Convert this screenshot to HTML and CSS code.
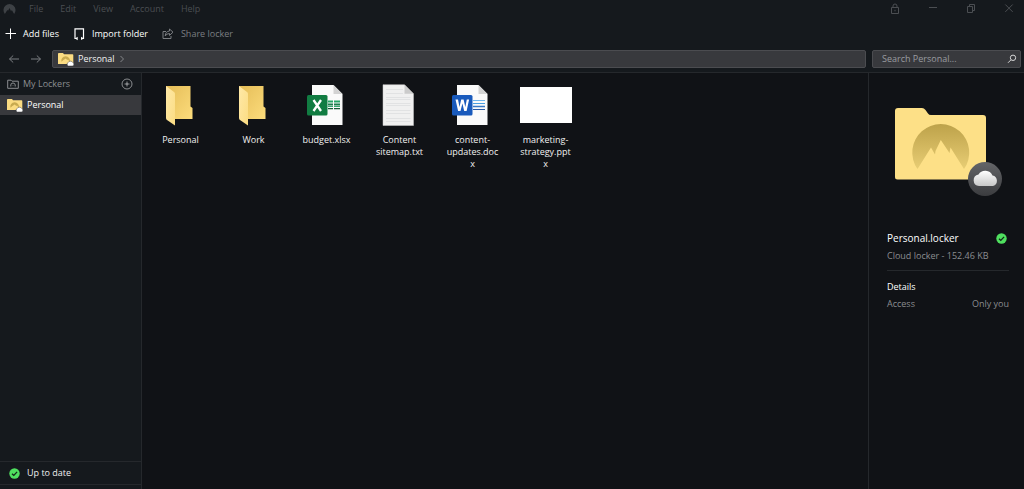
FILE: index.html
```html
<!DOCTYPE html>
<html lang="en">
<head>
<meta charset="utf-8">
<meta name="viewport" content="width=device-width, initial-scale=1">
<title>Personal</title>
<link rel="stylesheet" href="styles.css">
</head>
<body>
<svg class="defs" aria-hidden="true">
  <defs>
    <linearGradient id="flap" x1="0" y1="0" x2="1" y2="1"><stop offset="0" stop-color="#ffe9a8"/><stop offset="1" stop-color="#fbdc82"/></linearGradient>
    <linearGradient id="back" x1="0" y1="0" x2="1" y2="1"><stop offset="0" stop-color="#e5bd58"/><stop offset="1" stop-color="#fcdc7c"/></linearGradient>
    <linearGradient id="disc" x1="0" y1="0" x2="0" y2="1"><stop offset="0" stop-color="#bda24a"/><stop offset="1" stop-color="#e8cd74"/></linearGradient>
    <linearGradient id="badge" x1="0" y1="0" x2="0" y2="1"><stop offset="0" stop-color="#646568"/><stop offset="1" stop-color="#3b3c3f"/></linearGradient>
    <linearGradient id="cloud" x1="0" y1="0" x2="0" y2="1"><stop offset="0" stop-color="#fff"/><stop offset="1" stop-color="#c8c8c8"/></linearGradient>
  </defs>
  <symbol id="folder" viewBox="0 0 28 42">
    <path d="M1 2H25.500V22.500L27.500 24V35H9L1 28Z" fill="url(#back)"/>
    <path d="M1 2L9 8Q10 8.700 10 10V41.500L2 36Q1 35.300 1 34Z" fill="url(#flap)"/>
  </symbol>
  <symbol id="locker" viewBox="0 0 16 14">
    <path d="M0 1.500Q0 1 1 1H5L6 2.300H14.500Q15.300 2.300 15.300 3V12H0Z" fill="#fbdc82"/>
    <path d="M3.500 9.800A4.300 4.300 0 1 1 11.700 9.800L10 7.500L9.200 8L7.800 6.500L5.400 8Z" fill="#c8aa50"/>
    <path d="M10.300 14A2 2 0 0 1 10.400 10.300A2.400 2.400 0 0 1 14.500 10.300A1.900 1.900 0 0 1 14.400 14Z" fill="#fff" stroke="#38393d" stroke-width=".5"/>
  </symbol>
  <symbol id="check" viewBox="0 0 11 11">
    <circle cx="5.500" cy="5.500" r="5.200" fill="#4fe05f"/>
    <path d="M3 5.700L4.800 7.400L8.100 3.900" fill="none" stroke="#14271a" stroke-width="1.300"/>
  </symbol>
</svg>

<div class="app">
  <header class="titlebar">
    <svg class="logo" viewBox="0 0 14 12" aria-hidden="true"><path d="M2 11.300A6.500 6.500 0 1 1 12 11.300L9.500 7L8.700 8.300L7 5L5.500 7.800L4.700 7Z" fill="#3d4145"/></svg>
    <nav class="menu" aria-label="Main menu">
      <button>File</button><button>Edit</button><button>View</button><button>Account</button><button>Help</button>
    </nav>
    <div class="window-buttons">
      <button aria-label="Lock"><svg class="icon12" viewBox="0 0 12 12"><path d="M2.500 4.500H9.500V10.500H2.500ZM4 4.500V3A2 2 0 0 1 8 3V4.500M6 6.800V8.300"/></svg></button>
      <button aria-label="Minimize"><svg class="icon12" viewBox="0 0 12 12"><path d="M2 4.500H10"/></svg></button>
      <button aria-label="Restore"><svg class="icon12" viewBox="0 0 12 12"><path d="M2.500 3.500H7.500V9.500H2.500ZM4.500 3.500V1.500H9.500V7.500H7.500"/></svg></button>
      <button aria-label="Close"><svg class="icon12" viewBox="0 0 12 12"><path d="M2.300 1.500L9.700 8.900M9.700 1.500L2.300 8.900"/></svg></button>
    </div>
  </header>

  <div class="toolbar" role="toolbar" aria-label="Locker actions">
    <button class="tool tool-main"><svg class="icon12" viewBox="0 0 12 12" aria-hidden="true"><path d="M6.500 .5V11M1.500 5.500H12"/></svg>Add files</button>
    <button class="tool tool-main"><svg class="icon12" viewBox="0 0 12 12" aria-hidden="true"><path d="M4 10.500H2V.8H10.500V10.500H8" stroke-width="1.200"/><path d="M2 10.500L4.700 8.800V12.200Z M11 10.500L8 8.800V12Z" fill="currentColor" stroke="none"/></svg>Import folder</button>
    <button class="tool tool-share" disabled><svg class="icon12" viewBox="0 0 12 12" aria-hidden="true"><path d="M4 3.500H1V10.500H9V8M7.500 1L11 4.200L7.500 7.400V5.500Q4.500 5.500 3.200 8Q3.500 3.300 7.500 3Z"/></svg>Share locker</button>
  </div>

  <div class="addressbar">
    <div class="history">
      <button aria-label="Back"><svg class="icon12" viewBox="0 0 12 12"><path d="M1.500 6H11M5.200 2.500L1.500 6L5.200 9.500"/></svg></button>
      <button aria-label="Forward"><svg class="icon12" viewBox="0 0 12 12"><path d="M1 6H10.500M6.800 2.500L10.500 6L6.800 9.500"/></svg></button>
    </div>
    <nav class="path field" aria-label="Location">
      <svg class="locker-icon" aria-hidden="true"><use href="#locker"/></svg>
      <a href="#personal">Personal</a>
      <svg class="chevron" viewBox="0 0 6 8" aria-hidden="true"><path d="M1.500 1L4.500 4L1.500 7"/></svg>
    </nav>
    <label class="search field">
      <input type="text" placeholder="Search Personal..." aria-label="Search Personal">
      <svg class="search-icon" viewBox="0 0 10 10" aria-hidden="true"><circle cx="6" cy="3.800" r="2.700"/><path d="M4 5.800L1 8.800"/></svg>
    </label>
  </div>

  <div class="body">
    <aside class="sidebar">
      <div class="lockers-head">
        <svg class="icon12" viewBox="0 0 12 12" aria-hidden="true"><path d="M.7 2.200H4L5 3.200H11.300V10.300H.7Z"/><path d="M3.800 8.500V7A2.200 2 0 0 1 8.200 7V8.500M6 7V7.500"/></svg>
        <span>My Lockers</span>
        <button aria-label="Add locker"><svg class="icon12" viewBox="0 0 12 12"><circle cx="6" cy="6" r="5"/><path d="M6 3.500V8.500M3.500 6H8.500"/><circle cx="6" cy="6" r=".8"/></svg></button>
      </div>
      <a class="locker-link" href="#personal"><svg class="locker-icon" aria-hidden="true"><use href="#locker"/></svg>Personal</a>
      <div class="status"><svg class="check" aria-hidden="true"><use href="#check"/></svg>Up to date</div>
    </aside>

    <main class="files">
      <button class="file"><span class="thumb"><svg class="folder" aria-hidden="true"><use href="#folder"/></svg></span><span>Personal</span></button>
      <button class="file"><span class="thumb"><svg class="folder" aria-hidden="true"><use href="#folder"/></svg></span><span>Work</span></button>
      <button class="file"><span class="thumb"><svg class="doc" viewBox="0 0 38 42" aria-hidden="true">
        <path d="M6 1H27.500L36.500 10V41H6Z" fill="#fafafa"/><path d="M27.500 1V10H36.500Z" fill="#d3d3d3"/>
        <g fill="#27a566"><path d="M22 16.500h5v2h-5zM28 16.500h6v2h-6z"/><path fill="#1d7c4c" d="M22 19.500h5v2h-5zM28 19.500h6v2h-6z"/><path fill="#38a970" d="M22 22h5v1h-5zM28 22h6v1h-6z"/><path fill="#185c37" d="M22 24h5v1.300h-5zM28 24h6v1.300h-6z"/></g>
        <rect x="1" y="11" width="20.500" height="20.500" rx="1.500" fill="#117c42"/><path d="M7.500 16L15 27M15 16L7.500 27" stroke="#fff" stroke-width="2.300"/></svg></span><span>budget.xlsx</span></button>
      <button class="file"><span class="thumb"><svg class="doc" viewBox="0 0 38 42" aria-hidden="true">
        <path d="M4 .7H25.500L34.500 9.700V41.500H4Z" fill="#f0f0f0" stroke="#c9c9c9" stroke-width=".5"/><path d="M25.500 .7V9.700H34.500Z" fill="#cbcbcb"/>
        <path d="M7 5.500H24M7 9.500H24M7 13.500H31.500M7 15.500H31.500M7 19.500H31.500M7 21.500H31.500M7 26.500H31.500M7 29.500H31.500M7 34.500H31.500M7 37.500H31.500" stroke="#e1e2e3"/></svg></span><span>Content sitemap.txt</span></button>
      <button class="file"><span class="thumb"><svg class="doc" viewBox="0 0 38 42" aria-hidden="true">
        <path d="M5 1H26.500L35.500 10V41H5Z" fill="#fafafa"/><path d="M26.500 1V10H35.500Z" fill="#d3d3d3"/>
        <path d="M21 16.500H33" stroke="#70b6ee"/><path d="M21 19.500H33" stroke="#499fe2"/><path d="M21 22.500H33" stroke="#3979c7" stroke-width="1.500"/><path d="M21 25.500H33" stroke="#2859a5"/>
        <rect x="0" y="11" width="20.500" height="20.500" rx="1.500" fill="#195abc"/><path d="M3.500 15.500H6L7.500 23L9.200 15.500H11.600L13.300 23L14.800 15.500H17.100L14.600 27H12.200L10.400 19.500L8.500 27H6.100Z" fill="#fff"/></svg></span><span>content-updates.docx</span></button>
      <button class="file"><span class="thumb"><span class="slide"></span></span><span>marketing-strategy.pptx</span></button>
    </main>

    <aside class="details">
      <div class="preview"><svg class="big-locker" viewBox="0 0 110 90" aria-label="Personal locker" role="img">
        <path d="M1 4Q1 1 4 1H28Q30 1 31.500 3L34 6.500Q35 8 37 8H89Q92 8 92 11V70Q92 72.500 89.500 72.500H3.500Q1 72.500 1 70Z" fill="#fde087"/>
        <path d="M23.500 62A28.500 28.500 0 1 1 70 62L56.500 40.500L55.500 46L46.800 33L41.500 44L41 47.500L37 40.500Z" fill="url(#disc)"/>
        <circle cx="91" cy="72" r="17" fill="url(#badge)"/>
        <path d="M85 79A5.800 5.800 0 0 1 84.500 67.500A8 8 0 0 1 98.500 68.500A5.400 5.400 0 0 1 99 79Z" fill="url(#cloud)"/></svg></div>
      <div class="name-row"><h1>Personal.locker</h1><svg class="check" role="img" aria-label="Up to date"><use href="#check"/></svg></div>
      <p class="meta">Cloud locker - 152.46 KB</p>
      <h2>Details</h2>
      <dl class="facts"><dt>Access</dt><dd>Only you</dd></dl>
    </aside>
  </div>
</div>
</body>
</html>
```

FILE: styles.css
```css
* { box-sizing: border-box; }

:root {
  --chrome: #15191d;
  --content: #101216;
  --line: #25282c;
  --field: #38393d;
  --muted: #8b8d90;
  --dim: #4b4e52;
}

body {
  margin: 0;
  background: var(--content);
  color: #f0f0f0;
  font: 9px/12px "Open Sans", "Noto Sans", sans-serif;
}

button, input {
  font: inherit;
  color: inherit;
  background: none;
  border: 0;
  padding: 0;
}

a { color: inherit; text-decoration: none; }
svg { display: block; flex: none; }
.defs { position: absolute; width: 0; height: 0; }

.icon12, .chevron, .search-icon {
  width: 12px;
  height: 12px;
  fill: none;
  stroke: currentColor;
  overflow: visible;
}

.app { min-height: 100vh; display: flex; flex-direction: column; background: var(--chrome); }

.titlebar { display: flex; align-items: center; height: 17px; padding: 0 9px 0 3px; color: var(--dim); }
.logo { width: 13px; height: 12px; }
.menu { display: flex; gap: 17px; margin-left: 13px; }
.window-buttons { display: flex; gap: 26px; margin-left: auto; }

.toolbar { display: flex; align-items: center; gap: 14px; height: 33px; padding: 0 4px; }
.tool { display: flex; align-items: center; gap: 7px; }
.tool-main { color: #fff; font-weight: 500; }
.tool-share { color: #7b7e82; }

.addressbar { display: flex; height: 23px; padding: 0 3px 4px 8px; border-bottom: 1px solid var(--line); }
.history { display: flex; align-items: center; gap: 10px; margin-right: 10px; color: #7b7e82; }
.field { display: flex; align-items: center; background: var(--field); border: 1px solid #4b4c50; border-radius: 2px; }
.path { flex: 1; gap: 4px; padding: 0 5px; margin-right: 6px; }
.chevron { width: 6px; height: 8px; color: #85878a; }
.search { width: 149px; padding: 0 3px 0 9px; }
.search input { flex: 1; min-width: 0; outline: 0; }
.search input::placeholder { color: #9a9ca0; opacity: 1; }
.search-icon { width: 10px; height: 10px; color: #d4d4d4; }
.locker-icon { width: 16px; height: 14px; }

.body { flex: 1; display: flex; }

.sidebar { width: 142px; display: flex; flex-direction: column; border-right: 1px solid var(--line); }
.lockers-head { display: flex; align-items: center; gap: 4px; height: 22px; padding: 0 8px 0 7px; color: var(--muted); }
.lockers-head button { margin-left: auto; }
.locker-link { display: flex; align-items: center; gap: 4px; height: 20px; padding: 0 7px; background: var(--field); color: #fff; font-weight: 500; }
.status { display: flex; align-items: center; gap: 7px; height: 24px; margin: auto 0 4px; padding: 0 9px; border: solid var(--line); border-width: 1px 0; }
.check { width: 11px; height: 11px; }

.files { flex: 1; display: grid; grid-template-columns: repeat(auto-fill, 57px); gap: 16px; align-content: start; padding: 11px 10px; background: var(--content); }
.file { display: flex; flex-direction: column; align-items: center; gap: 8px; text-align: center; }
.file > span:last-child { width: 54px; overflow-wrap: anywhere; }
.thumb { display: flex; align-items: center; justify-content: center; height: 42px; }
.folder { width: 28px; height: 42px; margin-right: 4px; }
.doc { width: 38px; height: 42px; margin-right: 4px; }
.slide { width: 52px; height: 36px; background: #fff; }

.details { width: 156px; padding: 34px 15px 0 18px; border-left: 1px solid var(--line); background: var(--content); }
.preview { padding-left: 7px; }
.big-locker { width: 110px; height: 90px; }
.name-row { display: flex; align-items: center; justify-content: space-between; margin-top: 34px; padding-right: 2px; }
h1, h2, p, dl, dd { margin: 0; }
h1 { color: #fff; font-size: 10px; line-height: 14px; font-weight: 500; }
h2 { margin-top: 10px; color: #fff; font-size: 9px; font-weight: 500; }
.meta { margin-top: 5px; padding-bottom: 8px; border-bottom: 1px solid var(--line); color: var(--muted); }
.facts { display: flex; justify-content: space-between; margin-top: 5px; color: var(--muted); }
```
